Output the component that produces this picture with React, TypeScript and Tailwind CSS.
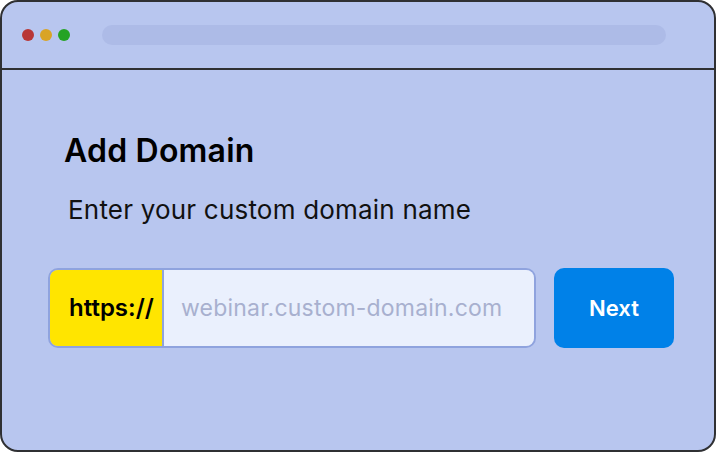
import React from "react";

const App: React.FC = () => {
  return (
    <div className="h-[452px] w-[716px] bg-white" style={{ fontFamily: "Inter, 'Noto Sans', sans-serif" }}>
      <div className="flex h-full w-full flex-col overflow-hidden rounded-[18px] border-2 border-[#2f3033] bg-[#b8c6ef]">
        <div className="flex h-[68px] shrink-0 items-center border-b-2 border-[#2f3033] pl-[20px] pr-[48px]">
          <div className="flex gap-[6px]">
            <span className="h-[12px] w-[12px] rounded-full bg-[#b83636]" />
            <span className="h-[12px] w-[12px] rounded-full bg-[#d9a426]" />
            <span className="h-[12px] w-[12px] rounded-full bg-[#24a324]" />
          </div>
          <div className="ml-[32px] h-[20px] flex-1 rounded-full bg-[#adbbe7]" />
        </div>
        <div className="flex flex-col pl-[46px] pr-[40px] pt-[60px]">
          <h1 className="ml-[16px] text-[32px] font-semibold leading-[42px] tracking-[0.2px] text-black">Add Domain</h1>
          <p className="ml-[20px] mt-[21px] text-[26px] leading-[34px] tracking-[0.2px] text-[#111]">
            Enter your custom domain name
          </p>
          <div className="mt-[41px] flex items-stretch gap-[18px]">
            <div className="flex h-[80px] w-[488px] overflow-hidden rounded-[10px] border-2 border-[#8fa3de]">
              <div className="flex w-[114px] items-center border-r-2 border-[#8fa3de] bg-[#ffe500] pl-[19px] text-[24px] font-semibold text-black">
                https://
              </div>
              <div className="flex flex-1 items-center bg-[#eaf0fd] pl-[17px] text-[23px] tracking-[0.2px] text-[#a8b0cf]">
                webinar.custom-domain.com
              </div>
            </div>
            <button className="flex h-[80px] w-[120px] items-center justify-center rounded-[10px] bg-[#0081e8] text-[22px] font-semibold text-white">
              Next
            </button>
          </div>
        </div>
      </div>
    </div>
  );
};

export default App;
